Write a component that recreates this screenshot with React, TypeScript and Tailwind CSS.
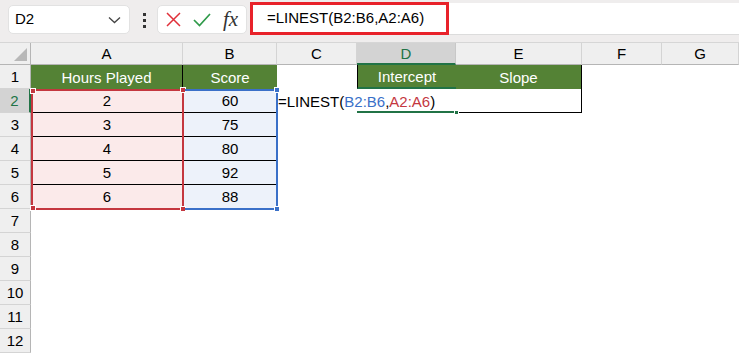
import React from "react";

const cols = ["A", "B", "C", "D", "E", "F", "G"];
const rows = [1, 2, 3, 4, 5, 6, 7, 8, 9, 10, 11, 12];
const data = [
  [2, 60],
  [3, 75],
  [4, 80],
  [5, 92],
  [6, 88],
];

const Corner = ({ className }: { className: string }) => (
  <span className={`absolute w-[6px] h-[6px] border border-white ${className}`} />
);

const Cell = ({ r, c }: { r: number; c: number }) => {
  const base = "flex items-center justify-center text-[15px] leading-none";
  if (r === 1) {
    if (c === 0) return <div className={`${base} bg-[#548235] text-white border-r border-black`}>Hours Played</div>;
    if (c === 1) return <div className={`${base} bg-[#548235] text-white`}>Score</div>;
    if (c === 3)
      return <div className={`${base} bg-[#548235] text-white border-l border-black border-b-2 border-b-[#217346]`}>Intercept</div>;
    if (c === 4) return <div className={`${base} bg-[#548235] text-white border-r border-black`}>Slope</div>;
    return <div />;
  }
  if (r >= 2 && r <= 6) {
    const v = data[r - 2];
    if (c === 0) return <div className={`${base} bg-[#fbeaea] border-b border-black`}>{v[0]}</div>;
    if (c === 1) return <div className={`${base} bg-[#edf2fa] border-b border-black`}>{v[1]}</div>;
  }
  if (r === 2) {
    if (c === 2)
      return (
        <div className="relative z-10 flex items-center pl-[1px] text-[15px] leading-none whitespace-nowrap">
          <span>=LINEST(</span>
          <span className="text-[#3a70c8]">B2:B6</span>
          <span>,</span>
          <span className="text-[#c4373f]">A2:A6</span>
          <span>)</span>
          <span className="ml-[1px] w-px h-[18px] bg-black" />
        </div>
      );
    if (c === 3)
      return (
        <div className="relative border-b-2 border-[#217346]">
          <span className="absolute -right-[3px] -bottom-[4px] w-[5px] h-[5px] bg-[#217346] border border-white" />
        </div>
      );
    if (c === 4) return <div className="border-r border-b border-black" />;
  }
  return <div />;
};

const App = () => {
  return (
    <div className="w-[739px] h-[355px] overflow-hidden bg-white text-black font-['Liberation_Sans',Arial,sans-serif]">
      {/* formula bar */}
      <div className="h-[43px] bg-[#efeded] border-b border-[#d6d6d6] flex items-start">
        <div className="mt-[5px] ml-[8px] w-[122px] h-[29px] bg-white rounded-[5px] border border-[#e2e2e2] flex items-center justify-between pl-[6px] pr-[8px] text-[15px]">
          <span>D2</span>
          <svg width="13" height="8" viewBox="0 0 13 8" fill="none" stroke="#444" strokeWidth="1.3">
            <path d="M1 1.5l5.5 5 5.5-5" />
          </svg>
        </div>
        <div className="mt-[13px] ml-[13px] flex flex-col gap-[3px]">
          <span className="w-[3px] h-[3px] bg-[#333]" />
          <span className="w-[3px] h-[3px] bg-[#333]" />
          <span className="w-[3px] h-[3px] bg-[#333]" />
        </div>
        <div className="mt-[5px] ml-[11px] w-[90px] h-[29px] bg-white rounded-[5px] border border-[#e2e2e2] flex items-center pl-[8px]">
          <svg width="15" height="15" viewBox="0 0 15 15" stroke="#e0303a" strokeWidth="1.5">
            <path d="M1 1l13 13M14 1L1 14" />
          </svg>
          <svg className="ml-[12px]" width="18" height="14" viewBox="0 0 18 14" fill="none" stroke="#2f9a4a" strokeWidth="1.7">
            <path d="M1 7l5.5 5.5L17 1" />
          </svg>
          <span className="ml-[12px] text-[21px] italic font-['Liberation_Serif',serif] leading-none text-[#333]">fx</span>
        </div>
        <div className="ml-[3px] mt-[3px] flex-1 h-[32px] bg-white border-b border-[#dcdcdc] relative">
          <div className="absolute -top-[1px] left-0 w-[199px] h-[33px] border-[3px] border-[#e8222a] flex items-center pl-[14px] text-[15px]">
            =LINEST(B2:B6,A2:A6)
          </div>
        </div>
      </div>

      {/* grid */}
      <div className="relative grid grid-cols-[31px_152px_94px_80px_99px_126px_80px_77px] grid-rows-[22px_repeat(12,24px)]">
        <div className="bg-[#efefef] border-r border-b border-[#b5b5b5] relative">
          <span className="absolute right-[3px] bottom-[3px] w-0 h-0 border-l-[13px] border-l-transparent border-b-[13px] border-b-[#b8b8b8]" />
        </div>
        {cols.map((c) => (
          <div
            key={c}
            className={`flex items-center justify-center text-[15px] leading-none border-r ${
              c === "D"
                ? "bg-[#d3d3d3] text-[#217346] border-b-2 border-b-[#217346] border-r-[#c8c8c8]"
                : "bg-[#efefef] border-b border-b-[#b5b5b5] border-r-[#d4d4d4]"
            }`}
          >
            {c}
          </div>
        ))}
        {rows.map((r) => (
          <React.Fragment key={r}>
            <div
              className={`flex items-center justify-center text-[15px] leading-none border-b border-[#d4d4d4] ${
                r === 2
                  ? "bg-[#d3d3d3] text-[#217346] border-r-2 border-r-[#217346]"
                  : "bg-[#efefef] border-r border-r-[#b5b5b5]"
              }`}
            >
              {r}
            </div>
            {cols.map((_, c) => (
              <Cell key={c} r={r} c={c} />
            ))}
          </React.Fragment>
        ))}

        {/* range highlights */}
        <div className="absolute left-[31px] top-[46px] w-[153px] h-[121px] border-2 border-[#c4373f] pointer-events-none">
          <Corner className="-left-[3px] -top-[3px] bg-[#c4373f]" />
          <Corner className="-right-[4px] -top-[4px] bg-[#c4373f]" />
          <Corner className="-right-[4px] -bottom-[4px] bg-[#c4373f]" />
          <Corner className="-left-[3px] -bottom-[3px] bg-[#c4373f]" />
        </div>
        <div className="absolute left-[185px] top-[46px] w-[93px] h-[121px] border-2 border-l-0 border-[#3a70c8] pointer-events-none">
          <Corner className="-right-[4px] -top-[4px] bg-[#3a70c8]" />
          <Corner className="-right-[4px] -bottom-[4px] bg-[#3a70c8]" />
        </div>
      </div>
    </div>
  );
};

export default App;
